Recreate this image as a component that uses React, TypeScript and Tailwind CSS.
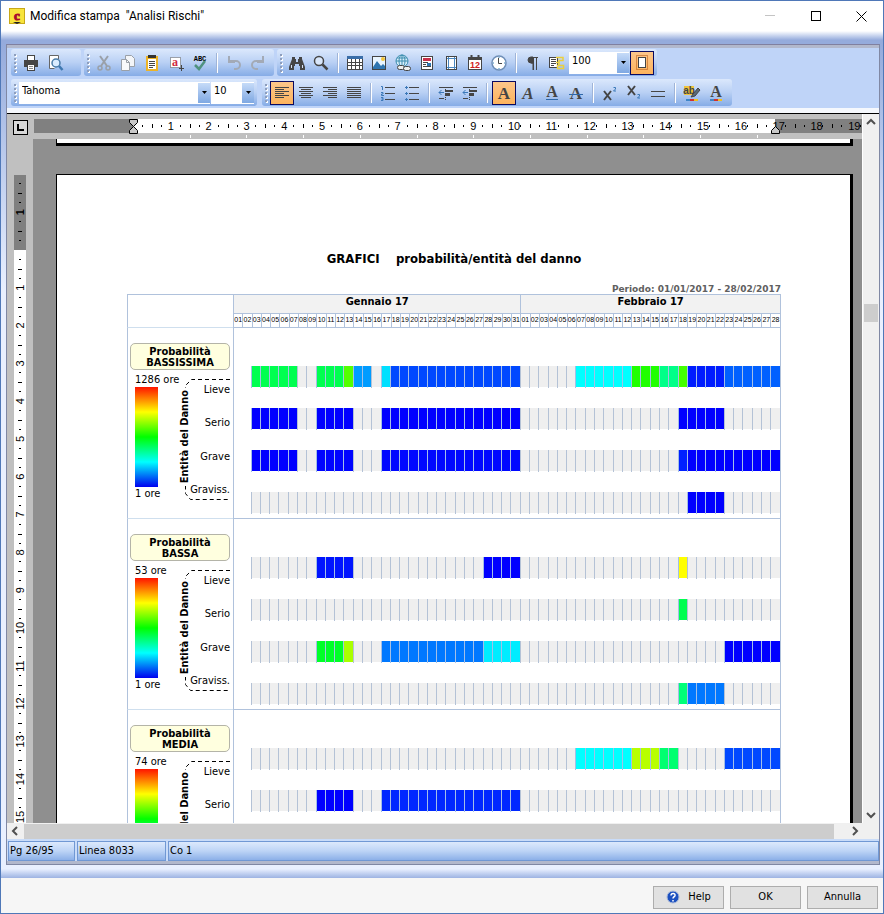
import type { ReactNode } from "react";

const UI = "font-['DejaVu_Sans_Condensed','Tahoma','DejaVu_Sans',sans-serif]";
const INK = "#454545";

type Run = [from: number, to: number, color: string];
type Band = { name: string; max: string; rows: { label: string; runs: Run[] }[] };

// Days are numbered from 1 (1 January) to 59 (28 February).
const BANDS: Band[] = [
  {
    name: "BASSISSIMA",
    max: "1286 ore",
    rows: [
      {
        label: "Lieve",
        runs: [
          [3, 7, "#00ff50"], [10, 12, "#00ff50"], [13, 13, "#55ff00"], [14, 15, "#009cff"],
          [17, 17, "#00e0ff"], [18, 31, "#0048ff"], [38, 43, "#00ffff"], [44, 46, "#20ff00"],
          [47, 48, "#00ff88"], [49, 49, "#44ff00"], [50, 53, "#001cff"], [54, 59, "#0060ff"],
        ],
      },
      { label: "Serio", runs: [[3, 7, "#0000ff"], [10, 13, "#0000ff"], [17, 31, "#0000ff"], [49, 53, "#0000ff"]] },
      {
        label: "Grave",
        runs: [[3, 7, "#0000ff"], [10, 13, "#0004ff"], [17, 31, "#0008ff"], [49, 49, "#0020ff"], [50, 59, "#0000ff"]],
      },
      { label: "Graviss.", runs: [[50, 53, "#0000ff"]] },
    ],
  },
  {
    name: "BASSA",
    max: "53 ore",
    rows: [
      { label: "Lieve", runs: [[10, 13, "#0014ff"], [28, 31, "#0000ff"], [49, 49, "#ffff00"]] },
      { label: "Serio", runs: [[49, 49, "#00ff50"]] },
      {
        label: "Grave",
        runs: [[10, 12, "#00ff28"], [13, 13, "#aaff00"], [17, 27, "#0078ff"], [28, 31, "#00ecff"], [54, 59, "#0000ff"]],
      },
      { label: "Graviss.", runs: [[49, 49, "#00ff78"], [50, 53, "#0078ff"]] },
    ],
  },
  {
    name: "MEDIA",
    max: "74 ore",
    rows: [
      { label: "Lieve", runs: [[38, 43, "#00ffff"], [44, 46, "#b8ff00"], [47, 48, "#00ff70"], [54, 59, "#0048ff"]] },
      { label: "Serio", runs: [[10, 13, "#0000ff"], [17, 31, "#0028ff"]] },
      { label: "Grave", runs: [] },
      { label: "Graviss.", runs: [] },
    ],
  },
];

const DAYS = Array.from({ length: 59 }, (_, i) => i + 1);
const dayLabel = (d: number) => String(d > 31 ? d - 31 : d).padStart(2, "0");

/* ---------- toolbar parts ---------- */

function Group({ children, className = "" }: { children: ReactNode; className?: string }) {
  return (
    <div
      className={`flex h-[27px] items-center rounded-[3px] bg-linear-to-b from-[#dbe8fc] via-[#b9d0f4] to-[#86ace6] ${className}`}
    >
      <svg width="8" height="20" className="shrink-0" aria-hidden="true">
        {[0, 1, 2, 3, 4].map((i) => (
          <g key={i}>
            <rect x="4" y={2 + i * 4} width="2" height="2" fill="#ffffff" />
            <rect x="3" y={1 + i * 4} width="2" height="2" fill="#8e9ebc" />
          </g>
        ))}
      </svg>
      {children}
    </div>
  );
}

function Tool({ label, active, children }: { label: string; active?: boolean; children: ReactNode }) {
  return (
    <button
      type="button"
      aria-label={label}
      className={`flex h-6 w-6 shrink-0 items-center justify-center border ${
        active ? "border-[#0a0a60] bg-linear-to-b from-[#fcc68a] to-[#fdb35c]" : "border-transparent"
      }`}
    >
      <svg width="18" height="18" viewBox="0 0 18 18" fill="none" stroke={INK} strokeWidth="1" aria-hidden="true">
        {children}
      </svg>
    </button>
  );
}

function Sep() {
  return (
    <div className="flex h-5 w-[10px] shrink-0 justify-center">
      <div className="w-px bg-[#9fb4d8]" />
      <div className="w-px bg-white" />
    </div>
  );
}

function Combo({ label, value, className }: { label: string; value: string; className: string }) {
  return (
    <div className={`relative h-[22px] shrink-0 bg-white ${className}`}>
      <select aria-label={label} defaultValue={value} className={`h-[18px] w-full appearance-none bg-transparent pl-[3px] text-[11px] leading-[18px] text-black ${UI}`}>
        <option>{value}</option>
      </select>
      <div className="pointer-events-none absolute inset-y-px right-0 flex w-3 items-center justify-center bg-linear-to-b from-[#c6dbf8] to-[#7fa8e2]">
        <svg width="5" height="3" aria-hidden="true"><path d="M0 0h5L2.500 3z" fill="#000" /></svg>
      </div>
    </div>
  );
}

function Lines({ rows }: { rows: [number, number][] }) {
  return (
    <>
      {rows.map(([x, w], i) => (
        <rect key={i} x={x} y={3 + i * 2} width={w} height="1" fill={INK} stroke="none" />
      ))}
    </>
  );
}

function Glyph({ children, x = 9, y = 15, size = 17, italic, fill = INK }: { children: string; x?: number; y?: number; size?: number; italic?: boolean; fill?: string }) {
  return (
    <text x={x} y={y} fontSize={size} fontStyle={italic ? "italic" : "normal"} fontWeight="bold" textAnchor="middle" fill={fill} stroke="none" fontFamily="Liberation Serif, serif">
      {children}
    </text>
  );
}

function ColorDots() {
  return (
    <g stroke="none">
      <rect x="3" y="15" width="4" height="2" fill="#3f86c8" />
      <rect x="7" y="15" width="4" height="2" fill="#d03030" />
      <rect x="11" y="15" width="4" height="2" fill="#f0c020" />
    </g>
  );
}

function FileTools() {
  return (
    <div className="flex gap-[3px]">
      <Group className="pr-[14px]">
        <Tool label="Stampa">
          <rect x="5.500" y="1.500" width="7" height="5" fill="#fff" />
          <rect x="2" y="6" width="14" height="7" fill={INK} stroke="none" />
          <rect x="5.500" y="10.500" width="7" height="6" fill="#fff" />
          <path d="M7 12.500h4M7 14.500h4" stroke="#888" />
        </Tool>
        <Tool label="Anteprima">
          <path d="M12.500 5V1.500h-9v13h5" fill="#fff" stroke="#666" />
          <circle cx="10" cy="9" r="4" fill="#d9ecff" stroke="#4a7ca8" strokeWidth="1.500" />
          <path d="M13 12l3.500 4" stroke="#3f78b0" strokeWidth="2.500" />
        </Tool>
      </Group>
      <Group className="pr-1">
        <Tool label="Taglia">
          <path d="M5 2l7 10M13 2L6 12" stroke="#9aa0a8" strokeWidth="2" />
          <circle cx="5" cy="14" r="2" stroke="#9aa0a8" strokeWidth="1.500" />
          <circle cx="13" cy="14" r="2" stroke="#9aa0a8" strokeWidth="1.500" />
        </Tool>
        <Tool label="Copia">
          <path d="M6.500 1.500h6l3 3v8h-9z" fill="#f3f5f8" stroke="#9aa0a8" />
          <path d="M2.500 5.500h5l3 3v8h-8z" fill="#f8f9fb" stroke="#9aa0a8" />
          <path d="M7.500 5.500v3h3" stroke="#9aa0a8" />
        </Tool>
        <Tool label="Incolla">
          <rect x="3" y="2" width="12" height="15" fill="#edb428" stroke="none" />
          <rect x="5" y="5" width="8" height="10" fill="#fff" stroke="none" />
          <rect x="5" y="1" width="8" height="3" fill="#333" stroke="none" />
          <path d="M6 7.500h6M6 9.500h6M6 11.500h6M6 13.500h4" />
        </Tool>
        <Tool label="Seleziona tutto">
          <rect x="3.500" y="3.500" width="10" height="10" fill="#fff" stroke="#555" strokeDasharray="1 1" />
          <Glyph x={8} y={12} size={12} fill="#d02840">a</Glyph>
          <path d="M14.500 11v6M12 14.500h5" />
        </Tool>
        <Tool label="Controllo ortografico">
          <text x="9" y="7" fontSize="7" fontWeight="bold" textAnchor="middle" fill="#000" stroke="none" fontFamily="Liberation Mono, monospace">ABC</text>
          <path d="M4 11l4 4 6-8" stroke="#4f9280" strokeWidth="2.500" />
        </Tool>
        <Sep />
        <Tool label="Annulla modifica">
          <path d="M5 7h6a4 4 0 010 8H9" stroke="#a3aab6" strokeWidth="2" />
          <path d="M4 2v6h6" stroke="#a3aab6" strokeWidth="2" />
        </Tool>
        <Tool label="Ripristina">
          <path d="M13 7H7a4 4 0 000 8h2" stroke="#a3aab6" strokeWidth="2" />
          <path d="M14 2v6H8" stroke="#a3aab6" strokeWidth="2" />
        </Tool>
      </Group>
      <Group className="pr-[3px]">
        <Tool label="Trova">
          <path d="M4 3h3v2h1v3h2V5h1V3h3v2l3 8v3h-5v-4h-1v-2H7v2H6v4H1v-3l3-8z" fill={INK} stroke="none" />
          <path d="M3.500 11v3M14.500 11v3" stroke="#d5e2f5" />
        </Tool>
        <Tool label="Zoom">
          <circle cx="7" cy="7" r="4.500" fill="#d8e6fa" strokeWidth="1.500" />
          <path d="M10.500 10.500l5 5" strokeWidth="2.500" />
        </Tool>
        <Sep />
        <Tool label="Tabella">
          <rect x="1.500" y="3.500" width="15" height="12" fill="#fff" />
          <rect x="1" y="2" width="16" height="3" fill="#3a6ea8" stroke="none" />
          <path d="M1 8.500h16M1 11.500h16M5.500 5v10M9.500 5v10M13.500 5v10" />
        </Tool>
        <Tool label="Immagine">
          <rect x="2.500" y="2.500" width="13" height="13" fill="#e9f5ff" />
          <path d="M3 13l4-6 4 5 2-2 2 2v3H3z" fill="#2f75b0" stroke="none" />
          <circle cx="13" cy="5" r="2" fill="#f4c53a" stroke="none" />
        </Tool>
        <Tool label="Collegamento">
          <circle cx="8" cy="7" r="6" fill="#d8eefb" stroke="#3b8cae" />
          <ellipse cx="8" cy="7" rx="3" ry="6" stroke="#3b8cae" />
          <path d="M2 7h12M3 4h10M8 1v12" stroke="#3b8cae" />
          <rect x="3.500" y="11.500" width="7" height="4" rx="2" fill="#eee" />
          <rect x="9.500" y="12.500" width="7" height="4" rx="2" fill="#eee" />
        </Tool>
        <Tool label="Intestazione">
          <rect x="3.500" y="2.500" width="11" height="13" fill="#fff" />
          <rect x="5" y="4" width="8" height="3" fill="#c8304a" stroke="none" />
          <path d="M5 8.500h5M5 10.500h3M5 12.500h8" />
          <rect x="9" y="9" width="4" height="3" fill="#2f75b0" stroke="none" />
        </Tool>
        <Tool label="Margini">
          <rect x="4.500" y="2.500" width="10" height="13" fill="#fff" />
          <path d="M6.500 3v12M12.500 3v12M5 4.500h9M5 13.500h9" stroke="#4b87c0" />
        </Tool>
        <Tool label="Data">
          <rect x="2.500" y="3.500" width="13" height="12" fill="#fff" />
          <rect x="2" y="3" width="14" height="3" fill={INK} stroke="none" />
          <path d="M5.500 1v3M12.500 1v3" strokeWidth="2" />
          <text x="9" y="14" fontSize="9" fontWeight="bold" textAnchor="middle" fill="#d02020" stroke="none" fontFamily="Liberation Sans, sans-serif">12</text>
        </Tool>
        <Tool label="Ora">
          <circle cx="9" cy="9" r="7" fill="#fff" stroke="#6f8fb8" strokeWidth="1.500" />
          <path d="M8.500 4v5.500H12" />
          <path d="M9 3v1M9 14v1M3 9h1M14 9h1" stroke="#3b8cc0" />
        </Tool>
        <Sep />
        <Tool label="Segni di paragrafo">
          <path d="M14 3.500H7.500a3 3 0 000 5.500H9v7" fill="none" />
          <path d="M9.500 3v13M12.500 3v13" />
          <path d="M9 3H7a3 3 0 000 6h2z" fill={INK} />
        </Tool>
        <Tool label="Campi">
          <rect x="1.500" y="3.500" width="8" height="10" fill="#fff" />
          <path d="M3 5.500h5M3 7.500h5M3 9.500h5M3 11.500h3" />
          <path d="M8 3.500h7v3h-4v5M11 8.500H8M9.500 11.500h6v3h-6z" stroke="#ecd03c" strokeWidth="1.500" />
        </Tool>
        <Combo label="Zoom percentuale" value="100" className="mr-px w-[60px]" />
        <Tool label="Layout pagina" active>
          <rect x="3.500" y="1.500" width="11" height="14" stroke="#b05010" strokeDasharray="1 1" />
          <rect x="5.500" y="3.500" width="7" height="10" fill="#fff" />
        </Tool>
      </Group>
    </div>
  );
}

function NumberedRows({ marks }: { marks: string[] }) {
  return (
    <>
      {[3, 9, 15].map((y, i) => (
        <g key={y}>
          <rect x="6" y={y} width="10" height="1" fill={INK} stroke="none" />
          <path d={marks[i]} stroke="#3b78b8" />
        </g>
      ))}
    </>
  );
}

function Indent() {
  return (
    <>
      <path d="M2 3.500h14M9 11.500h4M2 14.500h5" />
      <rect x="8" y="6" width="8" height="2" fill={INK} stroke="none" />
      <rect x="8" y="9" width="5" height="2" fill={INK} stroke="none" />
      <path d="M8.500 3v13" strokeDasharray="1 1" />
      <path d="M2 8.500h5M4.500 6L2 8.500 4.500 11" stroke="#3b78b8" />
    </>
  );
}

function TextTools() {
  return (
    <div className="flex gap-[5px]">
      <Group className="pr-[3px]">
        <Combo label="Carattere" value="Tahoma" className="mr-px w-[191px]" />
        <Combo label="Dimensione" value="10" className="w-[43px]" />
      </Group>
      <Group className="pr-1">
        <Tool label="Allinea a sinistra" active>
          <Lines rows={[[2, 14], [2, 9], [2, 14], [2, 9], [2, 14], [2, 9]]} />
        </Tool>
        <Tool label="Centra">
          <Lines rows={[[2, 14], [4, 10], [2, 14], [4, 10], [2, 14], [4, 10]]} />
        </Tool>
        <Tool label="Allinea a destra">
          <Lines rows={[[2, 14], [7, 9], [2, 14], [7, 9], [2, 14], [7, 9]]} />
        </Tool>
        <Tool label="Giustifica">
          <Lines rows={[[2, 14], [2, 14], [2, 14], [2, 14], [2, 14], [2, 14]]} />
        </Tool>
        <Sep />
        <Tool label="Elenco numerato">
          <NumberedRows marks={["M2 2.500h1.500V6", "M2 8.500h2v1.500H2.500v1.500H5", "M2 13.500h2v3H2M2.500 15h1.500"]} />
        </Tool>
        <Tool label="Elenco puntato">
          <NumberedRows marks={["M2 3.500h3M3.500 2v3", "M2 9.500h3M3.500 8v3", "M2 15.500h3M3.500 14v3"]} />
        </Tool>
        <Sep />
        <Tool label="Riduci rientro"><Indent /></Tool>
        <Tool label="Aumenta rientro"><Indent /></Tool>
        <Sep />
        <Tool label="Grassetto" active><Glyph>A</Glyph></Tool>
        <Tool label="Corsivo"><Glyph italic>A</Glyph></Tool>
        <Tool label="Sottolineato">
          <Glyph y={13} size={16}>A</Glyph>
          <path d="M3 15.500h12" stroke="#2f68a8" />
        </Tool>
        <Tool label="Barrato">
          <Glyph>A</Glyph>
          <path d="M2 10.500h14" stroke="#2f68a8" />
        </Tool>
        <Sep />
        <Tool label="Apice">
          <path d="M3 7l7 9M10 7l-7 9" strokeWidth="2" />
          <path d="M12.500 3.500h2V5L12.500 7H15" stroke="#3b78b8" />
        </Tool>
        <Tool label="Pedice">
          <path d="M3 2l7 9M10 2l-7 9" strokeWidth="2" />
          <path d="M12.500 10.500h2V12L12.500 14H15" stroke="#3b78b8" />
        </Tool>
        <Tool label="Linea orizzontale"><path d="M2 7.500h14M2 12.500h14" /></Tool>
        <Sep />
        <Tool label="Evidenziatore">
          <rect x="1" y="2" width="10" height="9" fill="#f0c43c" stroke="none" />
          <text x="6" y="10" fontSize="10" fontWeight="bold" textAnchor="middle" fill="#444" stroke="none" fontFamily="Liberation Sans, sans-serif">ab</text>
          <path d="M15 4l-5 6-2 3 4-1 5-6z" fill="#5a6a78" />
          <ColorDots />
        </Tool>
        <Tool label="Colore carattere">
          <Glyph y={13} size={16}>A</Glyph>
          <ColorDots />
        </Tool>
      </Group>
    </div>
  );
}

/* ---------- rulers ---------- */

const CM = 37.8;

function HorizontalRuler() {
  const zero = 99;
  return (
    <svg className="block h-[25px] w-full" aria-hidden="true">
      <rect x="0" y="5" width="828" height="14" fill="#808080" />
      <rect x={zero} y="5" width="642" height="14" fill="#ffffff" />
      {Array.from({ length: 20 }, (_, i) => {
        const x = zero + i * CM;
        return (
          <g key={i} fill="#000">
            {i > 0 && (
              <text x={x - 3} y="16" fontSize="11" fontFamily="Liberation Sans, Arial, sans-serif">{i}</text>
            )}
            <rect x={Math.round(x + 9)} y="11" width="1" height="2" />
            <rect x={Math.round(x + 19)} y="10" width="1" height="4" />
            <rect x={Math.round(x + 28)} y="11" width="1" height="2" />
          </g>
        );
      })}
      {Array.from({ length: 11 }, (_, i) => (
        <rect key={i} x={Math.round(zero + (i + 1) * CM * 1.5)} y="21" width="1" height="3" fill="#fff" />
      ))}
      <path d="M95.500 5.500h8v3l-4 4-4-4zM95.500 19.500h8v-3l-4-4-4 4z" fill="#c8c8c8" stroke="#000" />
      <path d="M737.500 19.500h8v-3l-4-4-4 4z" fill="#c8c8c8" stroke="#000" />
    </svg>
  );
}

function VerticalRuler() {
  const zero = 111;
  return (
    <svg className="block h-full w-[26px] shrink-0 bg-[#c0c0c0]" aria-hidden="true">
      <rect x="7" y="36" width="12" height="75" fill="#808080" />
      <rect x="7" y={zero} width="12" height="1000" fill="#ffffff" />
      {Array.from({ length: 18 }, (_, i) => {
        const n = i - 2;
        const y = zero + n * CM;
        return (
          <g key={i} fill="#000">
            {n !== 0 && n > -2 && (
              <text x="0" y="0" transform={`translate(17 ${y + (n > 9 ? 6 : 3)}) rotate(-90)`} fontSize="11" fontWeight={n < 0 ? "bold" : "normal"} fontFamily="Liberation Sans, Arial, sans-serif">
                {Math.abs(n)}
              </text>
            )}
            <rect x="12" y={Math.round(y + 9)} width="2" height="1" />
            <rect x="11" y={Math.round(y + 19)} width="4" height="1" />
            <rect x="12" y={Math.round(y + 28)} width="2" height="1" />
          </g>
        );
      })}
      <rect x="0" y="0" width="26" height="36" fill="#c0c0c0" />
    </svg>
  );
}

/* ---------- report ---------- */

function Cells({ runs }: { runs: Run[] }) {
  return (
    <div className="flex h-[22px]">
      {DAYS.map((d) => {
        const run = runs.find(([a, b]) => d >= a && d <= b);
        if (d < 3) return <div key={d} className="min-w-0 flex-1" />;
        return (
          <div key={d} className={`min-w-0 flex-1 border-l ${run ? "border-[#a4bfe6]" : "border-[#b4c2d6]"}`}>
            <div className="h-[21px] bg-[#efefef]" style={run ? { backgroundColor: run[2] } : undefined} />
          </div>
        );
      })}
    </div>
  );
}

function BandRow({ band }: { band: Band }) {
  return (
    <section className="flex h-[191px]">
      <div className="w-[106px] shrink-0 border-b border-l border-[#cfdfee] border-l-[#b0c2dc] pt-[15px] pl-[2px]">
        <h3 className="flex h-[27px] w-[100px] flex-col justify-center rounded-[5px] border border-[#b4b4a8] bg-[#ffffdf] text-center text-[11px] leading-[11px] font-bold">
          <span>Probabilità</span>
          <span>{band.name}</span>
        </h3>
        <div className="flex pt-[3px]">
          <div className="w-[46px] shrink-0 pl-[5px] text-[11px] leading-[14px] whitespace-nowrap">
            <div>{band.max}</div>
            <div className="h-[100px] w-[23px] bg-[linear-gradient(to_bottom,#ff1400,#ffff00_25%,#00ff00_50%,#00ffff_75%,#0000f0)]" />
            <div>1 ore</div>
          </div>
          <div className="relative h-[127px] w-[54px] shrink-0">
            <svg className="absolute top-0 left-0 h-[127px] w-[54px]" fill="none" stroke="#000" aria-hidden="true">
              <path d="M54 6.500H15.500L9.500 12.500V120.500L14.500 126.500H54" strokeDasharray="4 3" />
            </svg>
            <div className="absolute top-[15px] left-[2px] flex h-[98px] w-[13px] items-center justify-center bg-white [writing-mode:vertical-rl]">
              <span className="rotate-180 text-[11px] leading-[13px] font-bold whitespace-nowrap">Entità del Danno</span>
            </div>
            <div className="relative flex h-full flex-col justify-between pt-[10px] pb-[3px] text-right text-[11px] leading-[14px]">
              {band.rows.map((r) => (
                <span key={r.label}>{r.label}</span>
              ))}
            </div>
          </div>
        </div>
      </div>
      <div className="flex min-w-0 flex-1 flex-col gap-5 border-x border-b border-[#b0c2dc] pt-[38px]">
        {band.rows.map((r) => (
          <Cells key={r.label} runs={r.runs} />
        ))}
      </div>
    </section>
  );
}

function Report() {
  return (
    <div className={`pt-[76px] pr-[69px] pl-[70px] text-black ${UI}`}>
      <h2 className="text-center text-[13px] leading-4 font-bold whitespace-pre">GRAFICI{"    "}probabilità/entità del danno</h2>
      <p className="mt-[17px] text-right font-['DejaVu_Sans',sans-serif] text-[9px] leading-[10px] font-bold text-[#606060]">Periodo: 01/01/2017 - 28/02/2017</p>
      <div className="flex h-[34px]">
        <div className="w-[106px] shrink-0 border-y border-l border-[#b0c2dc] border-b-[#cfdfee]" />
        <div className="flex min-w-0 flex-1 flex-col border border-[#b0c2dc]">
          <div className="flex h-[19px] border-b border-[#b0c2dc] bg-[#f2f2f2] text-center text-[11px] leading-[13px] font-bold">
            <div className="flex-[31]">Gennaio 17</div>
            <div className="flex-[28] border-l border-[#b0c2dc]">Febbraio 17</div>
          </div>
          <div className="flex flex-1">
            {DAYS.map((d) => (
              <div key={d} className={`flex min-w-0 flex-1 justify-center font-['Liberation_Sans_Narrow','Liberation_Sans',sans-serif] text-[7px] leading-[12px] ${d > 1 ? "border-l border-[#b0c2dc]" : ""}`}>
                {dayLabel(d)}
              </div>
            ))}
          </div>
        </div>
      </div>
      {BANDS.map((b) => (
        <BandRow key={b.name} band={b} />
      ))}
    </div>
  );
}

function Arrow({ d, label }: { d: string; label: string }) {
  return (
    <button type="button" aria-label={label} className="flex h-4 w-4 shrink-0 items-center justify-center">
      <svg width="10" height="10" viewBox="0 0 10 10" fill="none" stroke="#505050" strokeWidth="2" aria-hidden="true"><path d={d} /></svg>
    </button>
  );
}

function Editor() {
  return (
    <div className="flex min-h-0 flex-1 border-t border-black bg-[#f0f0f0]">
      <div className="flex min-w-0 flex-1 flex-col">
        <div className="flex min-h-0 flex-1 flex-col border-r border-white bg-[#c0c0c0]">
          <div className="flex h-[25px] shrink-0">
            <div className="flex w-[27px] shrink-0 pt-[6px] pl-[6px]">
              <div className="flex h-[15px] w-[15px] items-center justify-center border border-black bg-[#d8d8d8]">
                <div className="h-[7px] w-[7px] border-b-2 border-l-2 border-black" />
              </div>
            </div>
            <div className="min-w-0 flex-1 overflow-hidden"><HorizontalRuler /></div>
          </div>
          <div className="flex min-h-0 flex-1 overflow-hidden">
            <VerticalRuler />
            <main className="min-w-0 flex-1 overflow-hidden bg-[#8f8f8f] pr-[9px] pl-[23px]">
              <div className="h-[7px] border-r-3 border-b-3 border-l border-black bg-white" />
              <div className="mt-[28px] border-t border-r-3 border-l border-black bg-white">
                <Report />
              </div>
            </main>
          </div>
        </div>
        <div className="flex h-4 shrink-0 items-center justify-between bg-[#f0f0f0]">
          <Arrow label="Scorri a sinistra" d="M7 1L3 5l4 4" />
          <div className="mr-[13px] ml-px h-[15px] flex-1 bg-[#cdcdcd]" />
          <Arrow label="Scorri a destra" d="M3 1l4 4-4 4" />
        </div>
      </div>
      <div className="flex w-4 shrink-0 flex-col items-center justify-between pb-4">
        <Arrow label="Scorri in alto" d="M1 7l4-4 4 4" />
        <div className="flex min-h-0 w-full flex-1 flex-col">
          <div className="h-[174px]" />
          <div className="mx-px h-[18px] bg-[#cdcdcd]" />
        </div>
        <Arrow label="Scorri in basso" d="M1 3l4 4 4-4" />
      </div>
    </div>
  );
}

const STATUS_CELL = "flex items-center border border-[#7098d4] bg-linear-to-b from-[#dce9fc] via-[#bdd4f6] to-[#8cb0e8] px-px";
const DIALOG_BUTTON = "flex h-[23px] w-[71px] items-center justify-center border border-[#adadad] bg-[#e1e1e1]";

export default function App() {
  return (
    <div className={`flex h-screen flex-col overflow-hidden border border-[#4f78b8] bg-white text-[11px] text-black ${UI}`}>
      <header className="flex h-[30px] shrink-0 items-center bg-white pl-2">
        <svg width="16" height="16" viewBox="0 0 16 16" aria-hidden="true">
          <rect width="16" height="16" fill="#c8a818" />
          <rect x="1" y="1" width="14" height="14" fill="#f8e43c" />
          <text x="8" y="12" fontSize="13" fontWeight="bold" textAnchor="middle" fill="#a80c2c" stroke="#a80c2c" fontFamily="Liberation Serif, serif">c</text>
          <path d="M4 14h8l-4 2z" fill="#222" />
        </svg>
        <h1 className="ml-[5px] flex-1 font-['Roboto','Segoe_UI',sans-serif] text-[12px] leading-4 whitespace-pre">Modifica stampa  "Analisi Rischi"</h1>
        <button type="button" aria-label="Riduci a icona" className="flex h-full w-[46px] items-center justify-center">
          <svg width="10" height="10" aria-hidden="true"><rect y="4" width="10" height="1" fill="#c4c4c4" /></svg>
        </button>
        <button type="button" aria-label="Ingrandisci" className="flex h-full w-[46px] items-center justify-center">
          <svg width="10" height="10" aria-hidden="true"><rect x="0.500" y="0.500" width="9" height="9" fill="none" stroke="#000" /></svg>
        </button>
        <button type="button" aria-label="Chiudi" className="flex h-full w-[44px] items-center justify-center">
          <svg width="11" height="11" aria-hidden="true"><path d="M0.500 0.500l10 10M10.500 0.500l-10 10" stroke="#000" /></svg>
        </button>
      </header>
      <div className="h-[13px] shrink-0 bg-linear-to-b from-white to-[#95abdc] to-70%" />
      <div className="flex min-h-0 flex-1 bg-linear-to-b from-[#95abdc] to-[#e9f0ff] to-30% px-[5px] pr-[3px]">
        <div className="flex min-w-0 flex-1 flex-col border border-[#8088a4] border-t-[#8080a0]">
          <div className="shrink-0 border-t-3 border-[#b2b8cc] bg-[#bfd4f8] pt-px pb-[2px] pl-1">
            <div className="flex flex-col gap-[3px]">
              <FileTools />
              <TextTools />
            </div>
          </div>
          <div className="h-[5px] shrink-0 bg-[#f5f8fd]" />
          <Editor />
          <footer className="flex h-[25px] shrink-0 gap-[2px] border-b-3 border-[#b2b8cc] bg-[#c9dcf9] pt-[2px] pl-px">
            <div className={`w-[67px] ${STATUS_CELL}`}>Pg 26/95</div>
            <div className={`w-[89px] ${STATUS_CELL}`}>Linea 8033</div>
            <div className={`flex-1 ${STATUS_CELL}`}>Co 1</div>
          </footer>
        </div>
      </div>
      <div className="h-[13px] shrink-0 bg-linear-to-b from-[#e9f0ff] from-30% to-[#9db3e2]" />
      <div className="flex h-[35px] shrink-0 items-center justify-end gap-[6px] bg-[#f6f6f6] pt-[3px] pr-[5px]">
        <button type="button" className={`${DIALOG_BUTTON} gap-2`}>
          <svg width="14" height="14" viewBox="0 0 14 14" aria-hidden="true">
            <circle cx="7" cy="7" r="6" fill="#1c50c0" stroke="#a8b8d8" />
            <path d="M5 5.500c0-3 4.500-2.500 4 0C8.500 7 7 7 7 8.500M7 10v1.500" fill="none" stroke="#fff" strokeWidth="1.500" />
          </svg>
          Help
        </button>
        <button type="button" className={DIALOG_BUTTON}>OK</button>
        <button type="button" className={DIALOG_BUTTON}>Annulla</button>
      </div>
    </div>
  );
}
